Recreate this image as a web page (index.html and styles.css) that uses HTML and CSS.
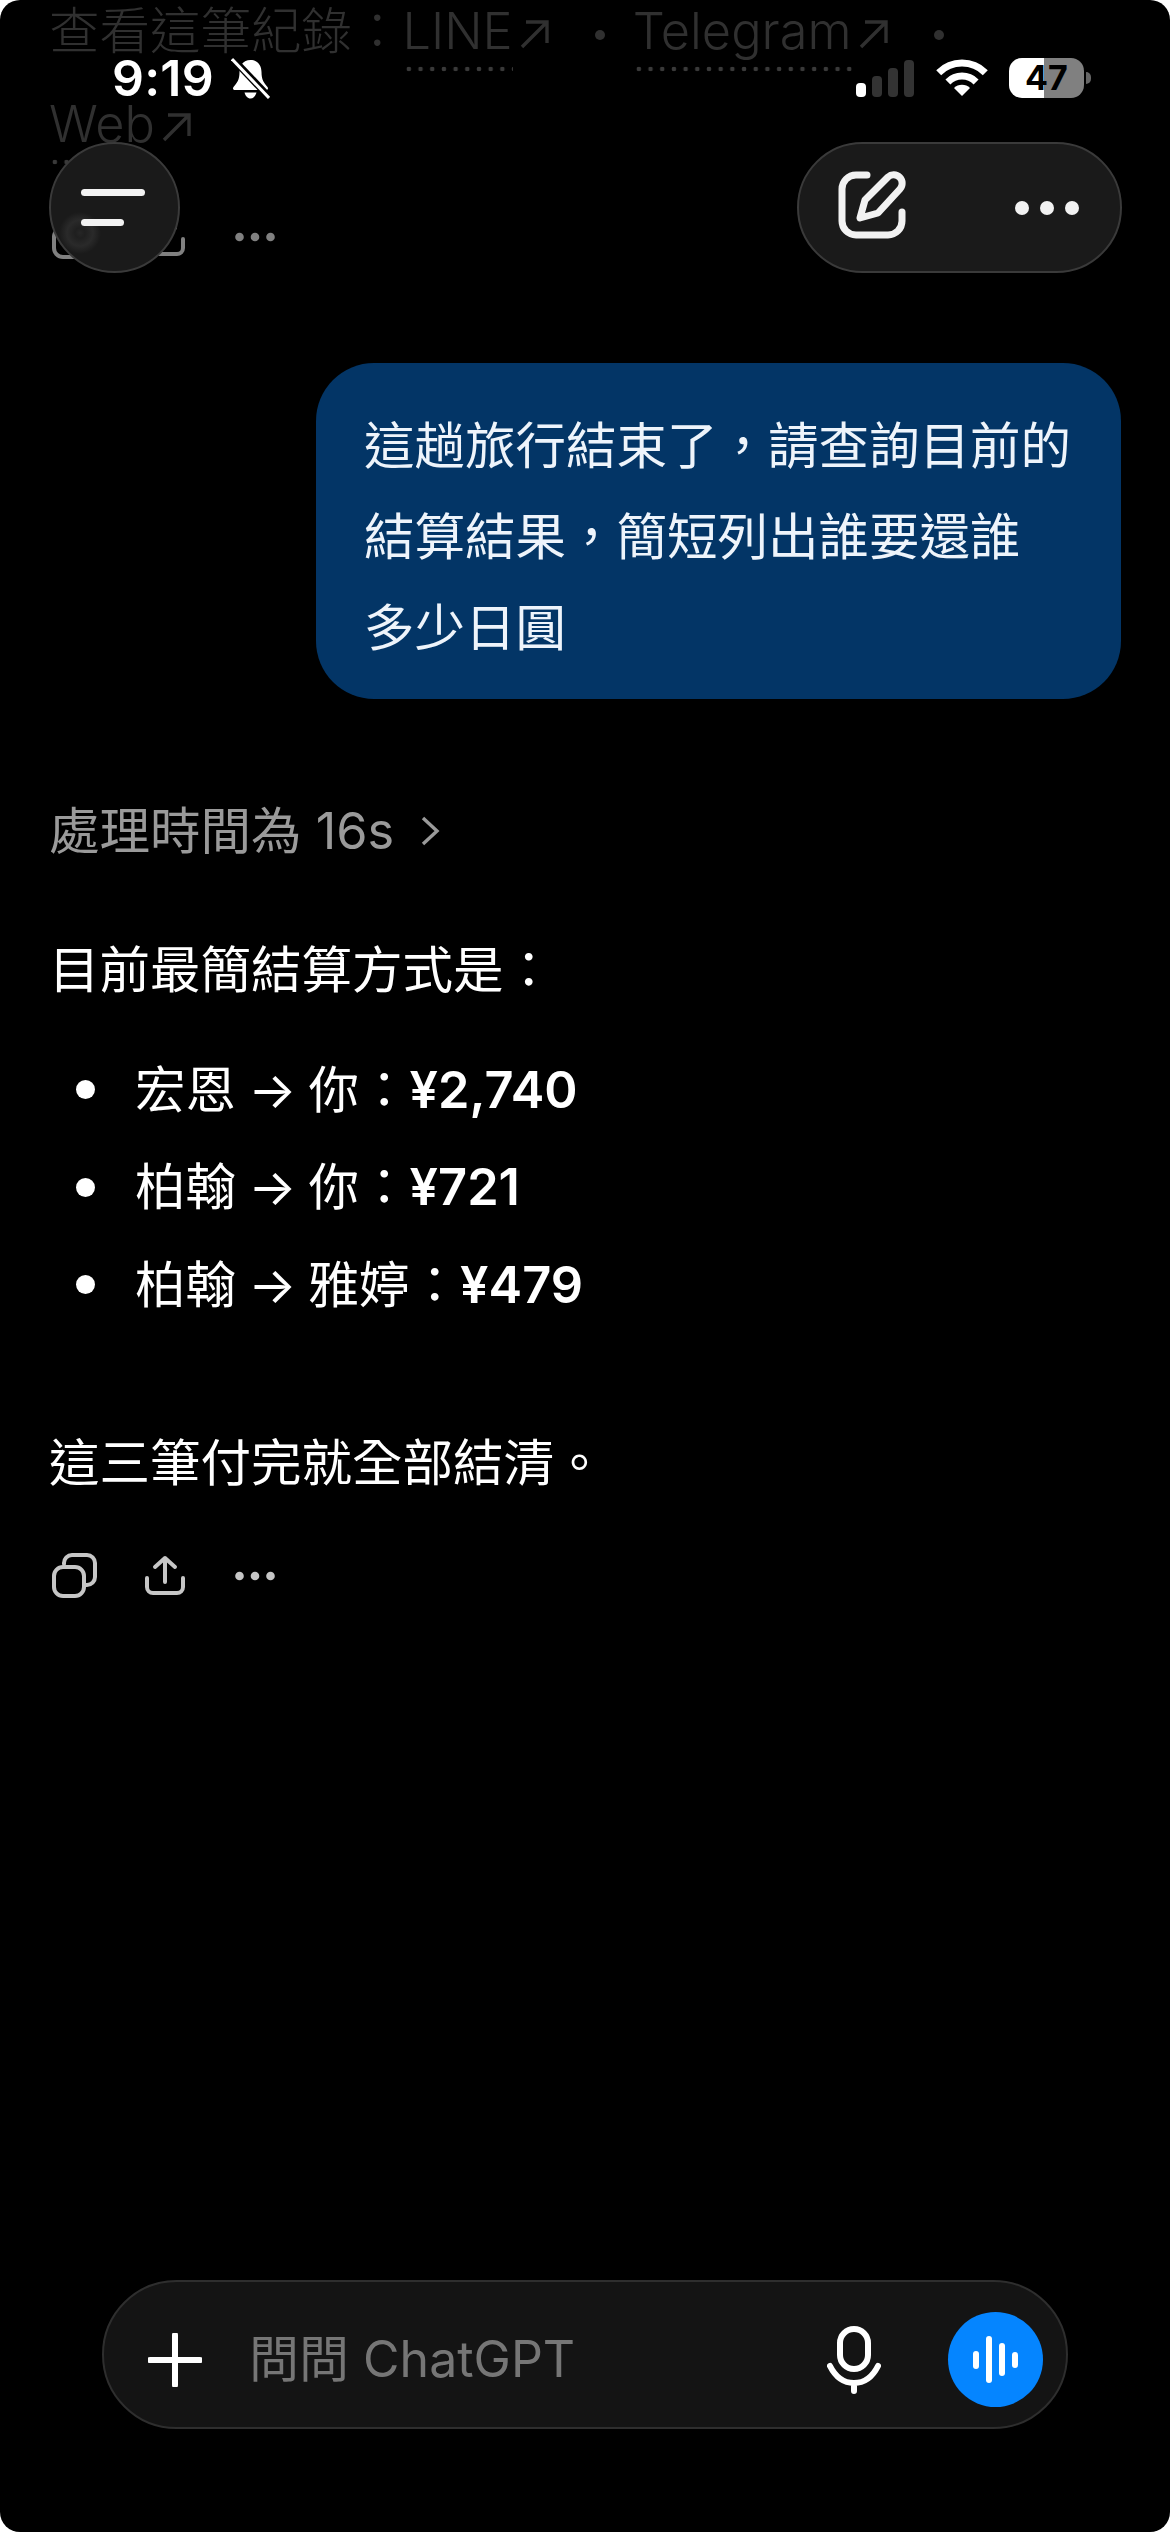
FILE: index.html
```html
<!DOCTYPE html>
<html lang="zh-Hant">
<head>
    <meta charset="UTF-8">
    <meta name="viewport" content="width=device-width, initial-scale=1.0">
    <title>ChatGPT</title>
    <link rel="stylesheet" href="styles.css">
</head>
<body>

    <svg class="sprites" width="0" height="0">
        <symbol id="ico-copy" viewBox="0 0 50 50">
            <rect x="4" y="16" width="30" height="29" rx="9" fill="none" stroke="currentColor" stroke-width="4"/>
            <path d="M14 13V12a8 8 0 0 1 8-8H37a8 8 0 0 1 8 8V26a8 8 0 0 1-8 8H36" fill="none" stroke="currentColor" stroke-width="4" stroke-linecap="round"/>
        </symbol>
        <symbol id="ico-share" viewBox="0 0 44 44">
            <path d="M4 24V33a6 6 0 0 0 6 6H34a6 6 0 0 0 6-6V24M22 4V28M12 13L22 4L32 13" fill="none" stroke="currentColor" stroke-width="4" stroke-linecap="round" stroke-linejoin="round"/>
        </symbol>
        <symbol id="ico-dots" viewBox="0 0 40 10">
            <circle cx="4.5" cy="5" r="4.3" fill="currentColor"/>
            <circle cx="20" cy="5" r="4.3" fill="currentColor"/>
            <circle cx="35.5" cy="5" r="4.3" fill="currentColor"/>
        </symbol>
        <symbol id="ico-out" viewBox="0 0 30 30">
            <path d="M2 28L27 3M6 3H27V24" fill="none" stroke="currentColor" stroke-width="3.4"/>
        </symbol>
    </svg>

    <div class="screen">

        <main class="chat">
            <p class="faded">查看這筆紀錄：<a class="src">LINE</a><svg class="out"><use href="#ico-out"/></svg><i class="sep"></i><a class="src">Telegram</a><svg class="out"><use href="#ico-out"/></svg><i class="sep"></i><br><a class="src">Web</a><svg class="out"><use href="#ico-out"/></svg></p>

            <div class="actions actions-dim">
                <svg class="a-copy"><use href="#ico-copy"/></svg>
                <svg class="a-share"><use href="#ico-share"/></svg>
                <svg class="a-dots"><use href="#ico-dots"/></svg>
            </div>

            <div class="bubble">這趟旅行結束了，請查詢目前的<br>結算結果，簡短列出誰要還誰<br>多少日圓</div>

            <div class="thought">處理時間為 16s
                <svg class="chev" viewBox="0 0 20 30"><path d="M3 2L17 15L3 28" fill="none" stroke="currentColor" stroke-width="3.4"/></svg>
            </div>

            <p class="lead">目前最簡結算方式是：</p>

            <ul class="pay">
                <li>宏恩 → 你：<b>¥2,740</b></li>
                <li>柏翰 → 你：<b>¥721</b></li>
                <li>柏翰 → 雅婷：<b>¥479</b></li>
            </ul>

            <p class="end">這三筆付完就全部結清。</p>

            <div class="actions">
                <svg class="a-copy"><use href="#ico-copy"/></svg>
                <svg class="a-share"><use href="#ico-share"/></svg>
                <svg class="a-dots"><use href="#ico-dots"/></svg>
            </div>
        </main>

        <!-- 狀態列 -->
        <div class="status">
            <div class="status-left">
                <span class="clock">9:19</span>
                <svg class="bell" viewBox="0 0 39 42">
                    <path d="M19.5 3C12 3 8.5 9 8.5 15C8.5 23 6 26 2.5 30C1.5 31.500 2 33 4 33H35C37 33 37.500 31.500 36.500 30C33 26 30.500 23 30.500 15C30.500 9 27 3 19.500 3ZM13.500 35.500C14.500 39 16.500 41.500 19.500 41.500C22.500 41.500 24.500 39 25.500 35.500Z" fill="#fff"/>
                    <path d="M1 1L38 40" stroke="#000" stroke-width="7"/>
                    <path d="M1 2L38 41" stroke="#fff" stroke-width="3"/>
                </svg>
            </div>
            <div class="status-right">
                <div class="signal">
                    <i class="on"></i><i></i><i></i><i></i>
                </div>
                <svg class="wifi" viewBox="0 0 52 38">
                    <path d="M2.700 13.700A33 33 0 0 1 49.300 13.700M11.900 22.900A20 20 0 0 1 40.100 22.900" fill="none" stroke="#fff" stroke-width="7"/>
                    <path d="M26 37L18 29A11.300 11.300 0 0 1 34 29Z" fill="#fff"/>
                </svg>
                <div class="battery">47</div>
                <i class="nub"></i>
            </div>
        </div>

        <button class="menu-btn"><span class="bar-long"></span><span class="bar-short"></span></button>

        <div class="top-pill">
            <svg class="edit" viewBox="0 0 80 80">
                <path d="M35 9H24A14 14 0 0 0 10 23V55A14 14 0 0 0 24 69H56A14 14 0 0 0 70 55V46" fill="none" stroke="#f2f2f2" stroke-width="7" stroke-linecap="round"/>
                <path d="M28 52L33 34L56 11A8.500 8.500 0 0 1 68 23L46 47Z" fill="none" stroke="#f2f2f2" stroke-width="7" stroke-linejoin="round"/>
            </svg>
            <svg class="more" viewBox="0 0 64 14">
                <circle cx="7" cy="7" r="7" fill="#f2f2f2"/>
                <circle cx="32" cy="7" r="7" fill="#f2f2f2"/>
                <circle cx="57" cy="7" r="7" fill="#f2f2f2"/>
            </svg>
        </div>

        <!-- 輸入框 -->
        <div class="composer">
            <svg class="plus" viewBox="0 0 54 54"><path d="M27 2V52M2 27H52" stroke="#fff" stroke-width="6" stroke-linecap="round"/></svg>
            <span class="placeholder">問問 ChatGPT</span>
            <svg class="mic" viewBox="0 0 54 68">
                <rect x="13" y="3" width="28" height="40" rx="14" fill="none" stroke="#fff" stroke-width="6"/>
                <path d="M3 40C8 50 16 57 27 57C38 57 46 50 51 40M27 57V65" fill="none" stroke="#fff" stroke-width="6" stroke-linecap="round"/>
            </svg>
            <div class="voice">
                <i class="w1"></i><i class="w2"></i><i class="w3"></i><i class="w4"></i>
            </div>
        </div>

    </div>

</body>
</html>
```

FILE: styles.css
```css
html {
    background-color: #fff;
}

body {
    margin: 0;
    font-family: Inter, "Noto Sans CJK TC", sans-serif;
    color: #fff;
}

.sprites {
    position: absolute;
}

.screen {
    position: relative;
    width: 1170px;
    height: 2532px;
    background-color: #000;
    border-radius: 20px;
    overflow: hidden;
}

.chat {
    padding: 0 49px;
    font-size: 50.5px;
    line-height: 60px;
}

/* 上方捲動中的文字 */
.faded {
    margin: -16px 0 0;
    line-height: 93px;
    font-weight: 300;
    color: #303030;
}

.src {
    padding-bottom: 11px;
    background: radial-gradient(circle, #3a3a3a 2px, transparent 2.6px) left bottom / 11.7px 6px repeat-x;
}

.out {
    display: inline-block;
    width: 30px;
    height: 30px;
    margin-left: 7px;
}

.sep {
    display: inline-block;
    width: 10px;
    height: 10px;
    margin: 0 28px 0 45px;
    border-radius: 50%;
    background-color: #303030;
    vertical-align: middle;
}

.actions {
    display: flex;
    align-items: center;
    height: 50px;
    margin-top: 58px;
    color: #c6c6c6;
}

.actions-dim {
    margin-top: 42px;
    color: #808080;
}

.a-copy {
    width: 50px;
    height: 50px;
    margin-left: 1px;
}

.a-share {
    width: 44px;
    height: 44px;
    margin-left: 43px;
}

.a-dots {
    width: 40px;
    height: 10px;
    margin-left: 48px;
}

.bubble {
    width: 709px;
    margin: 101px 0 0 267px;
    padding: 37px 48px 26px;
    background-color: #033566;
    border-radius: 58px;
    line-height: 91px;
    color: #eef4fb;
}

.thought {
    display: flex;
    align-items: center;
    margin-top: 102px;
    color: #9a9a9a;
}

.chev {
    width: 20px;
    height: 30px;
    margin-left: 26px;
}

.lead {
    margin: 79px 0 0;
}

.pay {
    list-style: none;
    margin: 41px 0 0;
    padding: 0;
}

.pay li {
    display: flex;
    align-items: center;
    height: 97.5px;
    white-space: pre;
    word-spacing: -2px;
}

.pay li::before {
    content: "";
    width: 19px;
    height: 19px;
    margin: 0 40px 0 27px;
    border-radius: 50%;
    background-color: #fff;
}

.pay b {
    font-weight: 600;
}

.end {
    margin: 99px 0 0;
}

/* 狀態列 */
.status {
    position: absolute;
    top: 57px;
    left: 112px;
    right: 79px;
    height: 42px;
    display: flex;
    justify-content: space-between;
    align-items: center;
}

.status-left,
.status-right {
    display: flex;
    align-items: center;
}

.clock {
    font-size: 50px;
    font-weight: 600;
    line-height: 42px;
    letter-spacing: 0.2px;
}

.bell {
    width: 39px;
    height: 42px;
    margin-left: 17px;
}

.signal {
    display: flex;
    align-items: flex-end;
    gap: 6px;
    height: 37px;
}

.signal i {
    width: 10px;
    border-radius: 4px;
    background-color: #333;
}

.signal i:nth-child(1) { height: 14px; background-color: #fff; }
.signal i:nth-child(2) { height: 21px; }
.signal i:nth-child(3) { height: 29px; }
.signal i:nth-child(4) { height: 37px; }

.wifi {
    width: 52px;
    height: 38px;
    margin-left: 22px;
}

.battery {
    width: 75px;
    height: 40px;
    margin-left: 21px;
    border-radius: 13px;
    background: linear-gradient(90deg, #fff 47%, #808080 47%);
    color: #000;
    font-size: 34px;
    font-weight: 700;
    line-height: 40px;
    text-align: center;
}

.nub {
    width: 5px;
    height: 12px;
    margin-left: 2px;
    border-radius: 0 6px 6px 0;
    background-color: #666;
}

/* 上方按鈕 */
.menu-btn {
    position: absolute;
    top: 142px;
    left: 49px;
    box-sizing: border-box;
    width: 131px;
    height: 131px;
    padding: 0 0 0 30px;
    display: flex;
    flex-direction: column;
    justify-content: center;
    align-items: flex-start;
    gap: 23px;
    border: 2px solid #3a3a3a;
    border-radius: 50%;
    background: radial-gradient(circle at 29px 89px, #262626 0, #1f1f1f 5px, #2a2a2a 13px, #1a1a1a 21px) #1a1a1a;
}

.bar-long,
.bar-short {
    height: 7px;
    border-radius: 4px;
    background-color: #f2f2f2;
}

.bar-long {
    width: 64px;
}

.bar-short {
    width: 43px;
}

.top-pill {
    position: absolute;
    top: 142px;
    left: 797px;
    box-sizing: border-box;
    width: 325px;
    height: 131px;
    padding: 0 41px 0 33px;
    display: flex;
    justify-content: space-between;
    align-items: center;
    border: 2px solid #3a3a3a;
    border-radius: 66px;
    background-color: #1a1a1a;
}

.edit {
    width: 80px;
    height: 80px;
    margin-top: -4px;
}

.more {
    width: 64px;
    height: 14px;
    margin-top: 1px;
}

/* 輸入框 */
.composer {
    position: absolute;
    left: 102px;
    bottom: 103px;
    box-sizing: border-box;
    width: 966px;
    height: 149px;
    padding: 0 23px 0 44px;
    display: flex;
    align-items: center;
    border: 2px solid #2e2e2e;
    border-radius: 75px;
    background-color: #141414;
}

.plus {
    width: 54px;
    height: 54px;
    margin-top: 10px;
}

.placeholder {
    margin-left: 47px;
    font-size: 50px;
    color: #767676;
}

.mic {
    width: 54px;
    height: 68px;
    margin-left: auto;
    margin-top: 10px;
}

.voice {
    width: 95px;
    height: 95px;
    margin-left: 67px;
    margin-top: 10px;
    display: flex;
    justify-content: center;
    align-items: center;
    gap: 7px;
    border-radius: 50%;
    background-color: #0585ff;
}

.voice i {
    width: 6px;
    border-radius: 3px;
    background-color: #fff;
}

.voice .w1 { height: 18px; }
.voice .w2 { height: 47px; }
.voice .w3 { height: 33px; }
.voice .w4 { height: 16px; }
```
